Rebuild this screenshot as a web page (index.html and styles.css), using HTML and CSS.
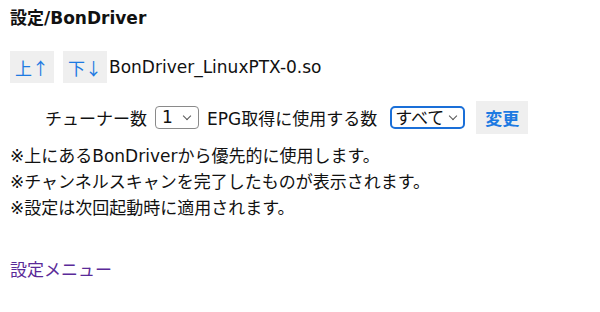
FILE: index.html
```html
<!DOCTYPE html>
<html lang="ja">
<head>
  <meta charset="utf-8">
  <link rel="stylesheet" href="styles.css">
</head>
<body>
  <h1 class="title">設定/BonDriver</h1>

  <div class="driver">
    <button class="move">上<span class="arrow">↑</span></button>
    <button class="move">下<span class="arrow">↓</span></button>
    <span class="driver-name">BonDriver_LinuxPTX-0.so</span>
  </div>

  <form class="tuner">
    <label>チューナー数</label>
    <span class="pick count">
      <select>
        <option>1</option>
        <option>2</option>
      </select>
    </span>
    <label>EPG取得に使用する数</label>
    <span class="pick epg">
      <select>
        <option>すべて</option>
        <option>1</option>
      </select>
    </span>
    <button type="button" class="apply">変更</button>
  </form>

  <div class="notes">
    <p>※上にあるBonDriverから優先的に使用します。</p>
    <p>※チャンネルスキャンを完了したものが表示されます。</p>
    <p>※設定は次回起動時に適用されます。</p>
  </div>

  <a class="menu" href="#">設定メニュー</a>
</body>
</html>
```

FILE: styles.css
```css
body {
  margin: 0;
  padding: 6px 10px;
  font-family: "DejaVu Sans", "Noto Sans CJK JP", sans-serif;
  font-size: 17px;
  color: #111;
  background: #fff;
}

.title {
  margin: 0;
  font-size: 17px;
  font-weight: bold;
  line-height: 24px;
}

.driver {
  display: flex;
  align-items: center;
  margin-top: 21px;
}

.driver-name {
  margin-left: 2px;
}

button {
  font-family: inherit;
  font-size: 17px;
  border: none;
  border-radius: 0;
  background: #efefef;
  color: #1d7ae2;
  cursor: pointer;
}

.move {
  display: flex;
  align-items: center;
  justify-content: center;
  width: 44px;
  height: 32px;
  padding: 0;
  margin-right: 9px;
}

.move:last-of-type {
  margin-right: 0;
}

.arrow {
  font-family: "Noto Sans CJK JP", sans-serif;
}

.tuner {
  display: flex;
  align-items: center;
  height: 33px;
  margin: 18px 0 0 35px;
}

.pick {
  position: relative;
  display: inline-flex;
  margin: 0 8px;
}

.pick::after {
  content: "";
  position: absolute;
  top: 7px;
  width: 5px;
  height: 5px;
  border-right: 1px solid #555;
  border-bottom: 1px solid #555;
  transform: rotate(45deg);
  pointer-events: none;
}

select {
  -webkit-appearance: none;
  appearance: none;
  font-family: inherit;
  font-size: 17px;
  line-height: 21px;
  height: 23px;
  margin: 0;
  padding: 0 0 0 6px;
  border: 1px solid #8a8a8a;
  border-radius: 4px;
  background: #fff;
  color: #111;
  outline: none;
}

.count select {
  width: 44px;
}

.count::after {
  right: 9px;
}

.epg {
  margin-left: 13px;
  margin-right: 11px;
}

.epg select {
  width: 75px;
  padding-left: 3px;
  border: 2px solid #1a6fd8;
  border-radius: 5px;
}

.epg::after {
  right: 9px;
}

.apply {
  width: 52px;
  height: 33px;
  padding: 0;
  font-weight: bold;
}

.notes {
  margin-top: 9px;
}

.notes p {
  margin: 0;
  line-height: 26px;
}

.menu {
  display: block;
  width: max-content;
  margin-top: 36px;
  line-height: 26px;
  color: #5a2a98;
  text-decoration: none;
}
```
